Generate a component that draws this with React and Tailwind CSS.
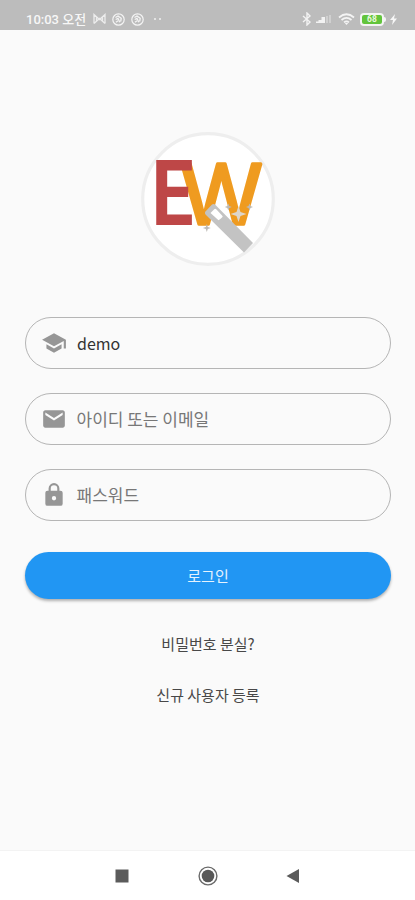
import React from "react";

function Bell() {
  return (
    <svg width="13" height="13" viewBox="0 0 13 13" fill="none" stroke="#f4f4f4">
      <circle cx="6.5" cy="6.5" r="5.7" strokeWidth="1.2" />
      <path d="M3.5 4.5 6 3l3.2 2.2-.5 3.3M3.7 6.5 6 5.4l1.8 3.8M4 9.3l2-1.6" strokeWidth="1.3" />
    </svg>
  );
}

function StatusBar() {
  return (
    <header className="flex h-[30px] shrink-0 items-center bg-[#bcbcbc] pt-[8px] pr-[18px] pl-[26px] font-[Roboto,'Noto_Sans_CJK_KR',sans-serif] text-[13px] leading-none font-medium text-[#f7f7f7]">
      <span className="w-[63px] whitespace-nowrap">10:03 오전</span>
      <svg className="ml-[4px]" width="13" height="12" viewBox="0 0 13 12" fill="none" stroke="#ececec" strokeWidth="1.3">
        <path d="M1 10.5v-9l5.5 5 5.500-5v9M1 10.5l5.500-5 5.500 5M3.500 4v5M9.500 4v5" />
      </svg>
      <span className="ml-[6px] flex gap-[6px]">
        <Bell />
        <Bell />
      </span>
      <span className="ml-[10px] flex gap-[3px]">
        <i className="h-[2px] w-[2px] rounded-full bg-[#f1f1f1]" />
        <i className="h-[2px] w-[2px] rounded-full bg-[#f1f1f1]" />
      </span>
      <span className="ml-auto flex items-center">
        <svg width="10" height="14" viewBox="0 0 10 14" fill="none" stroke="#f2f2f2" strokeWidth="1.400">
          <path d="m1 4 7 6-3 3V1l3 3-7 6" />
        </svg>
        <svg className="ml-[4px]" width="16" height="10" viewBox="0 0 16 10" fill="#f2f2f2">
          <path d="M0 9V7.500h2.500V9zM2.500 9V6H5.500v3zM5.500 9V3h3.500v6z" />
          <path d="M10 9V2h2v7zM13 9V1h2v8z" opacity=".38" />
        </svg>
        <svg className="ml-[6px]" width="17" height="13" viewBox="0 0 17 13" fill="none" stroke="#f4f4f4" strokeWidth="1.700">
          <path d="M1 4.500q7.500-6.500 15 0M3.500 7q5-4.300 10 0M6 9.300q2.500-2 5 0" />
          <path d="m6.800 10 1.700 2 1.700-2z" fill="#f4f4f4" stroke="none" />
        </svg>
        <span className="ml-[5px] flex h-[13px] w-[24px] items-center justify-center rounded-[4px] border-2 border-[#f4f4f4] bg-[#62c43c] text-[8.5px] leading-none font-bold text-[#e8f8df]">
          68
        </span>
        <i className="h-[5px] w-[2px] rounded-r-sm bg-[#f4f4f4]" />
        <svg className="ml-[4px]" width="7" height="11" viewBox="0 0 7 11" fill="#f7f7f7">
          <path d="M5 0 0 6h3L2 11l5-6.500H4z" />
        </svg>
      </span>
    </header>
  );
}

function Logo() {
  return (
    <svg className="mt-[102px] shrink-0 self-center" width="134" height="134" viewBox="141 132 134 134">
      <circle cx="208" cy="199" r="65.300" fill="#fff" stroke="#eeeeee" strokeWidth="3.200" />
      <text x="181.500" y="223.500" fill="#ef9b20" stroke="#ef9b20" strokeWidth="3.400" strokeLinejoin="round" fontFamily="Liberation Sans, sans-serif" fontSize="87.500" textLength="79.500" lengthAdjust="spacingAndGlyphs">W</text>
      <text x="151.500" y="225" fill="#be4747" fontFamily="Roboto, sans-serif" fontSize="90" fontWeight="700" textLength="42" lengthAdjust="spacingAndGlyphs">E</text>
      <path d="m205 212 7-7.500q1.500-.8 3 0L253 243l-9 9.500-37.500-37q-2-1.500-1.500-3.500z" fill="#c3c3c3" />
      <path d="m210.500 213 4-4q1-.5 2 .5l6 6.500q1 1-4 4.200z" fill="#fff" />
      <path d="m238.500 206 2 6 6 2-6 2-2 6-2-6-6-2 6-2z" fill="#ddd6cb" />
      <g fill="#bdbab5">
        <path d="m206.800 224 1 3 3 1-3 1-1 3-1-3-3-1 3-1z" />
        <path d="m228.300 203.500 1 2.500 2.500 1-2.500 1-1 2.500-1-2.500-2.500-1 2.500-1z" />
        <path d="m249.500 203.500 1 2.500 2.500 1-2.500 1-1 2.500-1-2.500-2.500-1 2.500-1z" />
      </g>
    </svg>
  );
}

const icons = {
  school: "M5 13.180v4L12 21l7-3.820v-4L12 17zM12 3 1 9l11 6 9-4.910V17h2V9z",
  mail: "M20 4H4c-1.100 0-2 .9-2 2v12c0 1.100.9 2 2 2h16c1.100 0 2-.9 2-2V6c0-1.100-.9-2-2-2m0 4.200-8 5.200-8-5.200V6l8 5 8-5z",
  lock: "M18 8h-1V6A5 5 0 0 0 7 6v2H6a2 2 0 0 0-2 2v10a2 2 0 0 0 2 2h12a2 2 0 0 0 2-2V10a2 2 0 0 0-2-2m-6 9a2 2 0 1 1 0-4 2 2 0 0 1 0 4M9 8V6a3 3 0 0 1 6 0v2z",
};

function Field({ icon, text, filled }) {
  return (
    <div className="flex h-[52px] items-center rounded-full border border-[#b5b5b5] pl-[15px]">
      <svg width="26" height="26" viewBox="0 0 24 24" fill="#969696">
        <path d={icons[icon]} />
      </svg>
      <span className={"leading-[24px] whitespace-nowrap " + (filled ? "ml-[10px] text-[16px] text-[#333333]" : "ml-[9.5px] text-[17px] text-[#777777]")}>
        {text}
      </span>
    </div>
  );
}

export default function App() {
  return (
    <div className="flex h-[900px] w-full flex-col overflow-hidden bg-[#fafafa] font-['Noto_Sans_CJK_KR',sans-serif]">
      <StatusBar />
      <main className="flex flex-1 flex-col pr-[24px] pl-[25px]">
        <Logo />
        <div className="mt-[51px] flex flex-col gap-[24px]">
          <Field icon="school" text="demo" filled />
          <Field icon="mail" text="아이디 또는 이메일" />
          <Field icon="lock" text="패스워드" />
        </div>
        <button className="mt-[31px] flex h-[47px] items-center justify-center rounded-full bg-[#2196f3] pt-[2px] text-[15px] text-[#e5f3fe] shadow-[0_2px_3px_rgba(0,0,0,0.3)]">
          로그인
        </button>
        <div className="mt-[33px] flex flex-col items-center gap-[27px] text-[15px] leading-[24px] text-[#484848]">
          <span>비밀번호 분실?</span>
          <span>신규 사용자 등록</span>
        </div>
      </main>
      <nav className="flex h-[50px] shrink-0 items-center justify-center gap-[65px] border-t border-[#f3f3f3] bg-white">
        <svg width="20" height="20" viewBox="0 0 20 20"><path d="M2.500 3.500h13v13h-13z" fill="#5b5b5b" /></svg>
        <svg width="20" height="20" viewBox="0 0 20 20">
          <circle cx="10" cy="10" r="8.900" fill="none" stroke="#6a6a6a" strokeWidth="1.400" />
          <circle cx="10" cy="10" r="6.300" fill="#585858" />
        </svg>
        <svg width="20" height="20" viewBox="0 0 20 20"><path d="M3.500 10 16 3v14z" fill="#5b5b5b" /></svg>
      </nav>
    </div>
  );
}
